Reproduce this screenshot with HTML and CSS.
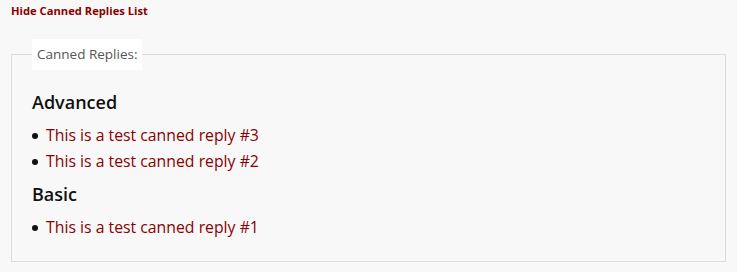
FILE: index.html
```html
<!DOCTYPE html>
<html lang="en">
<head>
    <meta charset="UTF-8">
    <title>Canned Replies</title>
    <link rel="stylesheet" href="styles.css">
</head>
<body>
    <a href="#" class="toggle-link">Hide Canned Replies List</a>

    <fieldset class="canned-box">
        <legend>Canned Replies:</legend>

        <h3>Advanced</h3>
        <ul>
            <li><a href="#">This is a test canned reply #3</a></li>
            <li><a href="#">This is a test canned reply #2</a></li>
        </ul>

        <h3>Basic</h3>
        <ul>
            <li><a href="#">This is a test canned reply #1</a></li>
        </ul>
    </fieldset>
</body>
</html>
```

FILE: styles.css
```css
body {
    margin: 0;
    padding: 4px 11px;
    background-color: #f8f8f8;
    font-family: 'Open Sans', sans-serif;
    color: #111;
}
a {
    color: #8b0000;
    text-decoration: none;
}
.toggle-link {
    display: block;
    font-size: 11.2px;
    font-weight: bold;
    line-height: 14px;
}
.canned-box {
    margin: 21px 0 0;
    padding: 12px 20px 21px;
    border: 1px solid #dcdcdc;
}
.canned-box legend {
    background: white;
    padding: 6px 5px;
    margin-left: 0;
    font-size: 13.5px;
    line-height: 19px;
    color: #555;
}
.canned-box h3 {
    margin: 9px 0 9px;
    font-size: 18px;
    font-weight: 600;
    line-height: 22px;
}
.canned-box ul {
    margin: 0;
    padding: 0;
    list-style: none;
}
.canned-box li {
    font-size: 15.8px;
    line-height: 26px;
}
.canned-box li::before {
    content: "";
    display: inline-block;
    width: 6px;
    height: 6px;
    margin: 0 8px 2px 0;
    border-radius: 50%;
    background: #111;
    vertical-align: middle;
}
```
